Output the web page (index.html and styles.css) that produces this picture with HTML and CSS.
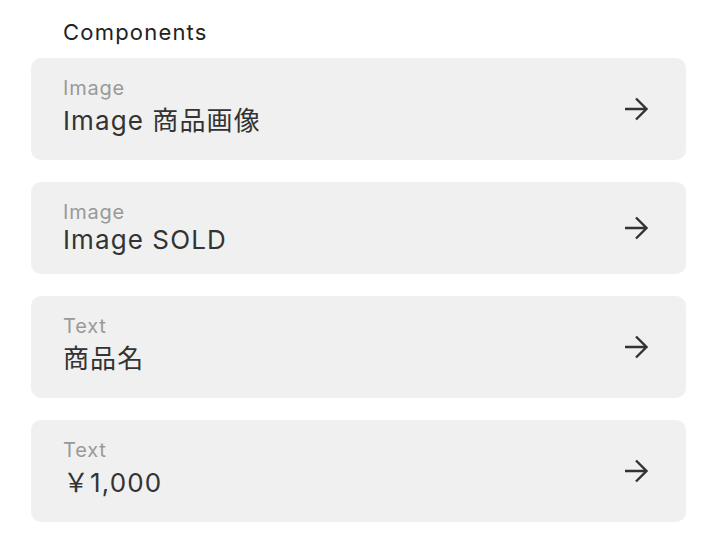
FILE: index.html
```html
<!DOCTYPE html>
<html>

<head>
	<title>Components</title>
	<meta charset="UTF-8">
	<link rel="stylesheet" href="styles.css">
	<meta name="viewport" content="width=device-width, initial-scale=1">
</head>

<body>
	<div class="panel">
		<h2 class="panel-title">Components</h2>

		<div class="component-list">
			<a class="component component--ja" href="#">
				<div class="component-text">
					<p class="component-type">Image</p>
					<p class="component-name">Image 商品画像</p>
				</div>
				<svg class="component-arrow" viewBox="0 0 24 24">
					<path d="M1 12h21M12 1.5l10.5 10.5L12 22.5" />
				</svg>
			</a>

			<a class="component" href="#">
				<div class="component-text">
					<p class="component-type">Image</p>
					<p class="component-name">Image SOLD</p>
				</div>
				<svg class="component-arrow" viewBox="0 0 24 24">
					<path d="M1 12h21M12 1.5l10.5 10.5L12 22.5" />
				</svg>
			</a>

			<a class="component component--ja" href="#">
				<div class="component-text">
					<p class="component-type">Text</p>
					<p class="component-name">商品名</p>
				</div>
				<svg class="component-arrow" viewBox="0 0 24 24">
					<path d="M1 12h21M12 1.5l10.5 10.5L12 22.5" />
				</svg>
			</a>

			<a class="component component--ja" href="#">
				<div class="component-text">
					<p class="component-type">Text</p>
					<p class="component-name">￥1,000</p>
				</div>
				<svg class="component-arrow" viewBox="0 0 24 24">
					<path d="M1 12h21M12 1.5l10.5 10.5L12 22.5" />
				</svg>
			</a>
		</div>
	</div>
</body>

</html>
```

FILE: styles.css
```css
body {
	margin: 0;
	background-color: #fff;
	font-family: Inter, "Noto Sans CJK JP", sans-serif;
	color: #333;
}

.panel {
	padding: 16px 30px 24px 31px;
}

.panel-title {
	margin: 0 0 10px 32px;
	font-size: 22px;
	font-weight: 400;
	line-height: 32px;
	letter-spacing: 1.2px;
	color: #222;
}

.component-list {
	display: flex;
	flex-direction: column;
	gap: 22px;
}

.component {
	display: flex;
	align-items: center;
	justify-content: space-between;
	padding: 18px 38px 18px 32px;
	background-color: #f0f0f0;
	border-radius: 10px;
	text-decoration: none;
	color: inherit;
}

.component-type {
	margin: 0;
	font-size: 20px;
	line-height: 24px;
	letter-spacing: 0.8px;
	color: #999;
}

.component-name {
	margin: 0;
	font-size: 26px;
	line-height: 32px;
	letter-spacing: 1.1px;
	color: #333;
}

/* japanese text sits on a taller line */
.component--ja .component-name {
	line-height: 42px;
}

.component-arrow {
	width: 24px;
	height: 24px;
	fill: none;
	stroke: #333;
	stroke-width: 2.4;
}
```
